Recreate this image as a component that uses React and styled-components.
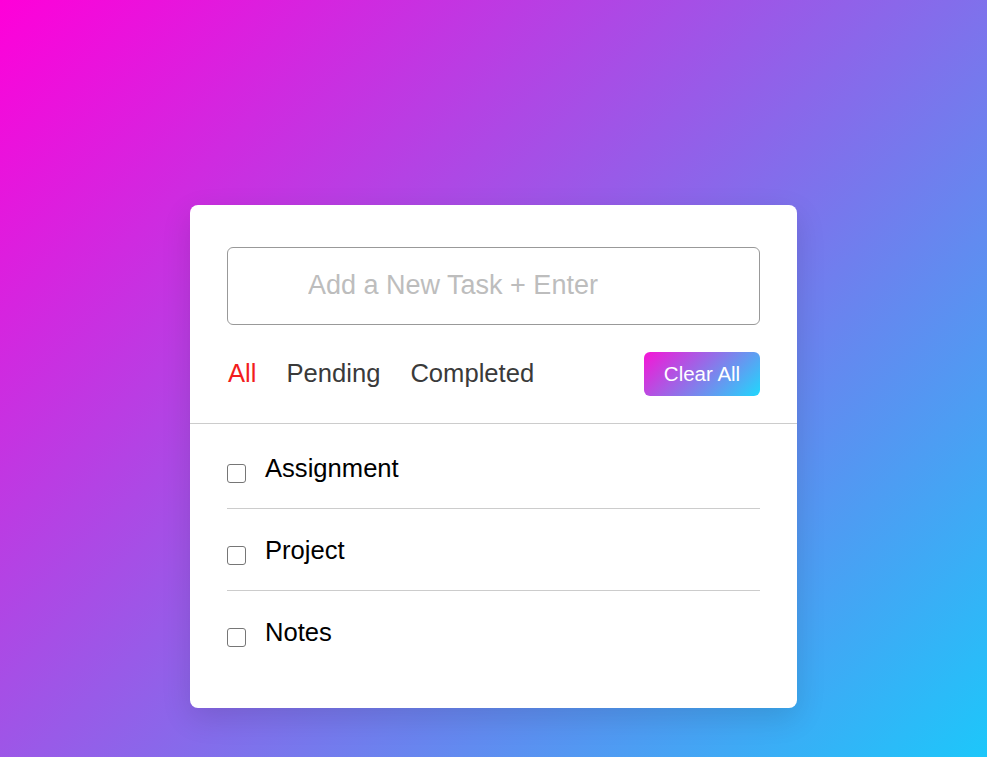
import React, { useState } from "react";
import styled, { createGlobalStyle } from "styled-components";

const GlobalStyle = createGlobalStyle`
  * { box-sizing: border-box; }
  html, body { margin: 0; padding: 0; }
  body {
    font-family: "Liberation Sans", Arial, sans-serif;
    min-height: 757px;
    background: linear-gradient(135deg, #ff00d9 0%, #1dc7fa 100%);
    background-attachment: fixed;
  }
`;

const Page = styled.div`
  min-height: 757px;
  display: flex;
  justify-content: center;
  align-items: flex-start;
  padding-top: 205px;
`;

const Card = styled.div`
  width: 607px;
  background: #fff;
  border-radius: 8px;
  box-shadow: 0 10px 30px rgba(0, 0, 0, 0.12);
`;

const Header = styled.div`
  padding: 42px 37px 27px;
  border-bottom: 1px solid #ccc;
`;

const TaskInput = styled.input`
  display: block;
  width: 100%;
  height: 78px;
  border: 1px solid #999;
  border-radius: 6px;
  padding: 0 20px 2px 80px;
  font-family: "Liberation Sans", Arial, sans-serif;
  font-size: 27px;
  color: #333;
  outline: none;
  &::placeholder { color: #bdbdbd; }
`;

const Controls = styled.div`
  margin-top: 27px;
  display: flex;
  align-items: center;
  justify-content: space-between;
  height: 44px;
`;

const Filters = styled.div`
  display: flex;
  gap: 30px;
  padding-left: 1px;
  margin-top: -1px;
`;

const Filter = styled.span`
  font-size: 25.6px;
  color: ${(p) => (p.$active ? "#f21d1d" : "#3a3a3a")};
  cursor: pointer;
`;

const ClearButton = styled.button`
  width: 116px;
  height: 44px;
  border: none;
  border-radius: 6px;
  background: linear-gradient(135deg, #f714d6 0%, #1fd8fd 100%);
  color: #fff;
  font-family: "Liberation Sans", Arial, sans-serif;
  font-size: 20.5px;
  cursor: pointer;
  padding: 0;
`;

const List = styled.ul`
  list-style: none;
  margin: 0;
  padding: 3px 37px 36px;
`;

const Item = styled.li`
  display: flex;
  align-items: flex-start;
  gap: 19px;
  padding: 26px 0 25px;
  border-bottom: 1px solid #ccc;
  &:last-child { border-bottom: none; }
`;

const Check = styled.input.attrs({ type: "checkbox" })`
  appearance: none;
  -webkit-appearance: none;
  width: 19px;
  height: 19px;
  margin: 11px 0 0 0;
  border: 1.5px solid #767676;
  border-radius: 3px;
  background: #fff;
  flex-shrink: 0;
  cursor: pointer;
  &:checked {
    background: #0075ff;
    border-color: #0075ff;
  }
`;

const TaskName = styled.span`
  font-size: 25.6px;
  line-height: 30px;
  color: #000;
`;

export default function App() {
  const [active, setActive] = useState("All");
  const tasks = ["Assignment", "Project", "Notes"];
  return (
    <>
      <GlobalStyle />
      <Page>
        <Card>
          <Header>
            <TaskInput placeholder="Add a New Task + Enter" />
            <Controls>
              <Filters>
                {["All", "Pending", "Completed"].map((f) => (
                  <Filter key={f} $active={active === f} onClick={() => setActive(f)}>
                    {f}
                  </Filter>
                ))}
              </Filters>
              <ClearButton>Clear All</ClearButton>
            </Controls>
          </Header>
          <List>
            {tasks.map((t) => (
              <Item key={t}>
                <Check />
                <TaskName>{t}</TaskName>
              </Item>
            ))}
          </List>
        </Card>
      </Page>
    </>
  );
}
